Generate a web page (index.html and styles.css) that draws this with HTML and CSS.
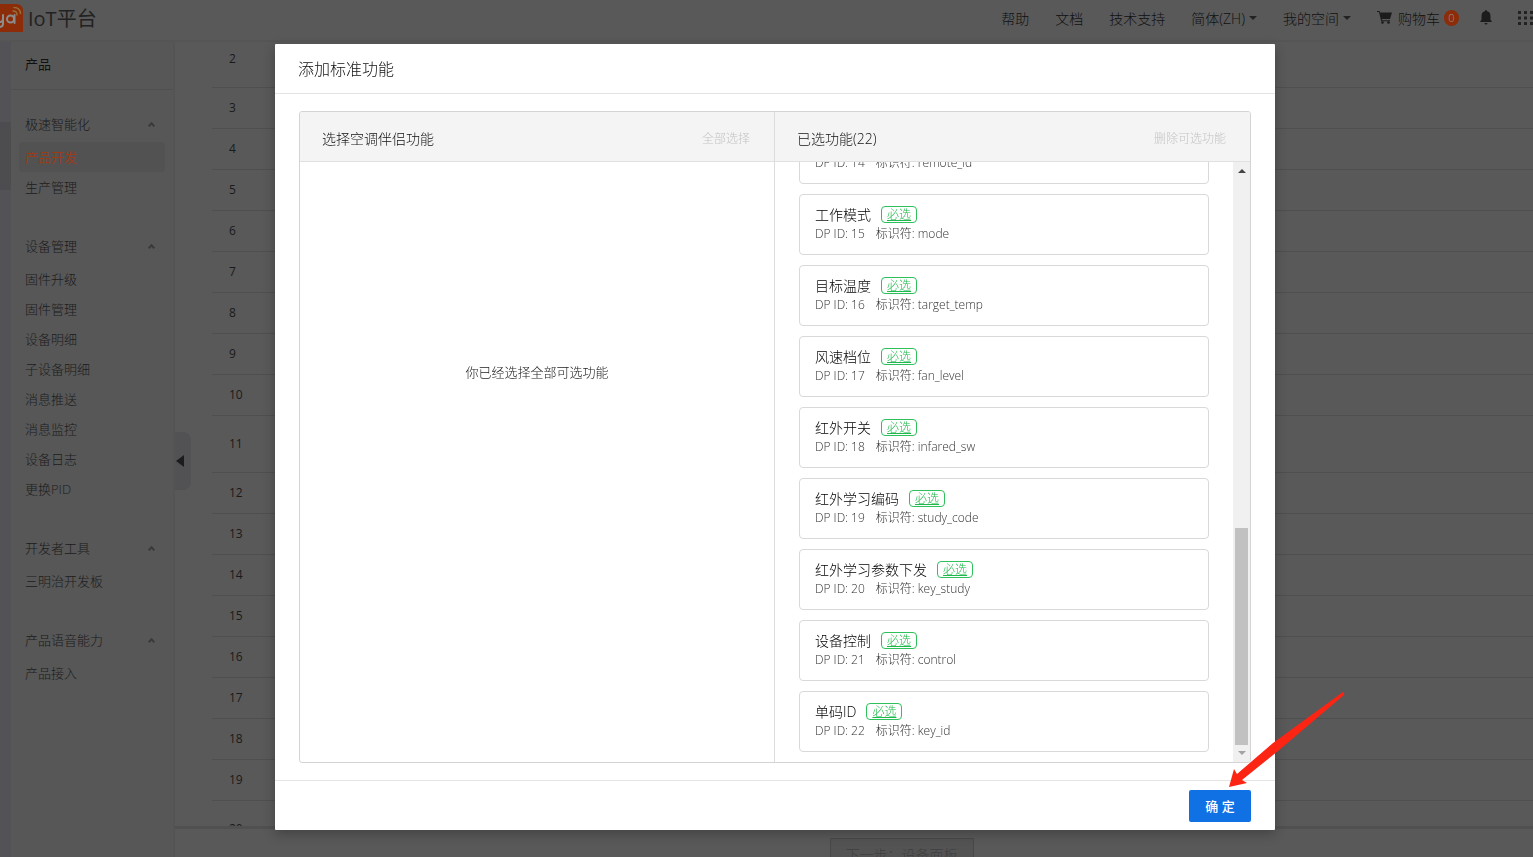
FILE: index.html
```
<!DOCTYPE html>
<html lang="zh-CN">
<head>
<meta charset="utf-8">
<title>IoT平台</title>
<link rel="stylesheet" href="styles.css">
</head>
<body>
<div class="app">
  <header class="topbar">
    <a class="brand" href="#">
      <svg class="brand-mark" width="23" height="32" viewBox="0 0 23 32" aria-hidden="true">
        <path d="M0 4h16q7 0 7 7v21H0z" fill="#8c2c08"/>
        <g fill="none" stroke="#8c8c8c" stroke-width="2" stroke-linecap="round">
          <path d="M-3 15v4q0 3 3 3t3-3v-4M3 18v6q0 3-4 3"/>
          <circle cx="10.500" cy="19" r="3.500"/><path d="M14.500 15v8"/>
          <path d="M13 11q4 0 4 4M14 7.500q6 0 6.500 6" stroke="#94713a" stroke-width="1.500"/>
        </g>
      </svg>
      <span class="brand-name">IoT平台</span>
    </a>
    <nav class="topnav">
      <a href="#">帮助</a>
      <a href="#">文档</a>
      <a href="#">技术支持</a>
      <button class="drop">简体(ZH)<i class="caret"></i></button>
      <button class="drop">我的空间<i class="caret"></i></button>
      <a class="cart" href="#">
        <svg width="15" height="13" viewBox="0 0 15 13" aria-hidden="true"><path d="M0 0h2.600l.5 1.600H15L13 8H4.800l.3 1.300H13v1H4.200L2 1H0z" fill="#1c1c1c"/><circle cx="5.500" cy="11.500" r="1.300" fill="#1c1c1c"/><circle cx="11.500" cy="11.500" r="1.300" fill="#1c1c1c"/></svg>
        <span>购物车</span><span class="count">0</span>
      </a>
      <button class="icon-button bell" aria-label="通知">
        <svg width="12" height="15" viewBox="0 0 12 15" aria-hidden="true"><path d="M6 0q1 0 1 1.300Q10.500 2 10.500 6v3.500L12 12H0l1.500-2.500V6Q1.500 2 5 1.300 5 0 6 0zM4.500 13h3q0 1.500-1.500 1.500T4.500 13z" fill="#1c1c1c"/></svg>
      </button>
      <button class="icon-button" aria-label="应用">
        <svg width="15" height="14" viewBox="0 0 15 14" aria-hidden="true"><path d="M0 0h3v3H0zM6 0h3v3H6zM12 0h3v3h-3zM0 5.500h3v3H0zM6 5.500h3v3H6zM12 5.500h3v3h-3zM0 11h3v3H0zM6 11h3v3H6zM12 11h3v3h-3z" fill="#222"/></svg>
      </button>
    </nav>
  </header>
  <div class="workspace">
    <div class="rail"><div class="rail-active"></div></div>
    <aside class="sidebar">
      <h2 class="side-title">产品</h2>
      <section class="group">
        <button class="group-head">极速智能化<i class="chevron"></i></button>
        <a class="item active" href="#">产品开发</a>
        <a class="item" href="#">生产管理</a>
      </section>
      <section class="group">
        <button class="group-head">设备管理<i class="chevron"></i></button>
        <a class="item" href="#">固件升级</a>
        <a class="item" href="#">固件管理</a>
        <a class="item" href="#">设备明细</a>
        <a class="item" href="#">子设备明细</a>
        <a class="item" href="#">消息推送</a>
        <a class="item" href="#">消息监控</a>
        <a class="item" href="#">设备日志</a>
        <a class="item" href="#">更换PID</a>
      </section>
      <section class="group">
        <button class="group-head">开发者工具<i class="chevron"></i></button>
        <a class="item" href="#">三明治开发板</a>
      </section>
      <section class="group">
        <button class="group-head">产品语音能力<i class="chevron"></i></button>
        <a class="item" href="#">产品接入</a>
      </section>
      <button class="collapse" aria-label="收起"><svg width="8" height="12" viewBox="0 0 8 12" aria-hidden="true"><path d="M8 0v12L0 6z" fill="#1c1c1c"/></svg></button>
    </aside>
    <main class="content">
      <div class="table-area">
        <table class="functions">
          <tr class="tall"><td>2</td></tr>
          <tr><td>3</td></tr>
          <tr><td>4</td></tr>
          <tr><td>5</td></tr>
          <tr><td>6</td></tr>
          <tr><td>7</td></tr>
          <tr><td>8</td></tr>
          <tr><td>9</td></tr>
          <tr><td>10</td></tr>
          <tr class="tall"><td>11</td></tr>
          <tr><td>12</td></tr>
          <tr><td>13</td></tr>
          <tr><td>14</td></tr>
          <tr><td>15</td></tr>
          <tr><td>16</td></tr>
          <tr><td>17</td></tr>
          <tr><td>18</td></tr>
          <tr><td>19</td></tr>
          <tr class="tall"><td>20</td></tr>
        </table>
      </div>
      <footer class="next-bar"><button class="next">下一步：设备面板</button></footer>
    </main>
  </div>
</div>

<div class="modal-layer">
  <section class="modal" role="dialog" aria-labelledby="modal-title">
    <header class="modal-head"><h1 id="modal-title">添加标准功能</h1></header>
    <div class="modal-body">
      <div class="transfer">
        <section class="pane">
          <header class="pane-head"><h2>选择空调伴侣功能</h2><button class="link" disabled>全部选择</button></header>
          <p class="empty">你已经选择全部可选功能</p>
        </section>
        <section class="pane">
          <header class="pane-head"><h2>已选功能(22)</h2><button class="link" disabled>删除可选功能</button></header>
          <div class="scroller">
            <div class="cards">
              <article class="card"><p><span>DP ID: 14</span><span>标识符: remote_id</span></p></article>
              <article class="card"><h3>工作模式<span class="tag">必选</span></h3><p><span>DP ID: 15</span><span>标识符: mode</span></p></article>
              <article class="card"><h3>目标温度<span class="tag">必选</span></h3><p><span>DP ID: 16</span><span>标识符: target_temp</span></p></article>
              <article class="card"><h3>风速档位<span class="tag">必选</span></h3><p><span>DP ID: 17</span><span>标识符: fan_level</span></p></article>
              <article class="card"><h3>红外开关<span class="tag">必选</span></h3><p><span>DP ID: 18</span><span>标识符: infared_sw</span></p></article>
              <article class="card"><h3>红外学习编码<span class="tag">必选</span></h3><p><span>DP ID: 19</span><span>标识符: study_code</span></p></article>
              <article class="card"><h3>红外学习参数下发<span class="tag">必选</span></h3><p><span>DP ID: 20</span><span>标识符: key_study</span></p></article>
              <article class="card"><h3>设备控制<span class="tag">必选</span></h3><p><span>DP ID: 21</span><span>标识符: control</span></p></article>
              <article class="card"><h3>单码ID<span class="tag">必选</span></h3><p><span>DP ID: 22</span><span>标识符: key_id</span></p></article>
            </div>
            <div class="scrollbar" aria-hidden="true">
              <i class="arrow-up"></i><div class="track"><div class="thumb"></div></div><i class="arrow-down"></i>
            </div>
          </div>
        </section>
      </div>
    </div>
    <footer class="modal-foot"><button class="confirm">确 定</button>
      <svg class="pointer" width="116" height="96" viewBox="0 0 116 96" aria-hidden="true"><path d="M0 95L5 77l3 5L44 51 114 0q2 1 1 3L49 59 13 88l5 3z" fill="#fc2413"/></svg>
    </footer>
  </section>
</div>
</body>
</html>
```
FILE: styles.css
```
* { box-sizing: border-box; }
body {
  margin: 0;
  font-family: "Open Sans", "Noto Sans CJK SC", sans-serif;
  font-size: 13px;
  font-weight: 300;
  color: #1a1a1a;
  background: #595959;
  overflow: hidden;
}
h1, h2, h3, p { margin: 0; font-weight: inherit; }
a { color: inherit; text-decoration: none; }
button { font: inherit; color: inherit; border: 0; padding: 0; background: none; }

.app { height: 100vh; display: flex; flex-direction: column; }
.topbar {
  flex: none;
  height: 42px;
  display: flex;
  justify-content: space-between;
  border-bottom: 2px solid #555;
}
.brand { display: flex; align-items: flex-start; gap: 5px; }
.brand-name { font-size: 20px; line-height: 38px; font-weight: 400; color: #222; }
.topnav { display: flex; align-items: center; height: 35px; gap: 26px; font-size: 14px; color: #111; }
.drop { display: flex; align-items: center; gap: 4px; }
.caret { border: 4px solid transparent; border-top-color: #222; border-bottom: 0; }
.cart { display: flex; align-items: center; gap: 6px; }
.count {
  width: 15px; height: 16px; margin-left: -2px;
  border-radius: 8px; background: #8c2c08; color: #999;
  font-size: 11px; line-height: 16px; text-align: center;
}
.icon-button { display: flex; }
.bell { margin-left: -5px; }

.workspace { flex: 1; min-height: 0; display: flex; }
.rail { flex: none; width: 11px; padding-top: 80px; background: #535357; }
.rail-active { height: 68px; background: #4d4d50; }
.sidebar {
  position: relative;
  flex: none;
  width: 164px;
  background: #575757;
  border-right: 2px solid #545454;
}
.side-title {
  height: 48px; line-height: 45px; font-size: 13px; padding-left: 14px;
  color: #111; border-bottom: 1px solid #505050; font-weight: 400;
}
.group { padding: 14px 8px 0; }
.group + .group { padding-top: 24px; }
.group-head {
  width: 100%; height: 38px; padding: 0 9px 0 6px;
  display: flex; align-items: center; justify-content: space-between;
}
.chevron {
  width: 5px; height: 5px; margin: 4px 2px 0 0;
  border: solid #3a3a3a; border-width: 2px 0 0 2px;
  transform: rotate(45deg);
}
.item { display: block; height: 30px; line-height: 31px; padding-left: 6px; color: #1c1c1c; border-radius: 4px; }
.item.active { background: #525252; color: #9c3c17; font-weight: 400; }
.collapse {
  position: absolute; left: 164px; top: 390px;
  width: 16px; height: 58px; padding-left: 1px;
  background: #525255; border-radius: 0 8px 8px 0;
  display: flex; align-items: center;
}
.content { flex: 1; min-width: 0; display: flex; flex-direction: column; }
.table-area { flex: 1; min-height: 0; overflow: hidden; padding-left: 37px; }
.functions { width: 100%; border-collapse: collapse; margin-top: -12px; }
.functions td { height: 41px; padding: 0 0 0 17px; border-bottom: 1px solid #4f4f4f; font-size: 12px; font-weight: 400; }
.functions .tall td { height: 57px; }
.next-bar { flex: none; height: 31px; border-top: 3px solid #505050; display: flex; justify-content: center; overflow: hidden; padding: 9px 0 0 95px; }
.next { height: 32px; padding: 0 15px; flex: none; border: 1px solid #484848; background: #535353; color: #404040; font-size: 14px; }

.modal-layer {
  position: fixed; inset: 0;
  display: flex; justify-content: center; align-items: flex-start;
  padding: 44px 0 27px 17px;
}
.modal {
  width: 1000px; max-width: 100%; height: 100%;
  display: flex; flex-direction: column;
  background: #fff; border-radius: 1px;
  box-shadow: 0 4px 12px rgba(0, 0, 0, .25);
}
.modal-head { flex: none; height: 50px; padding-left: 23px; border-bottom: 1px solid #e4e4e4; }
.modal-head h1 { font-size: 16px; line-height: 51px; color: #111; }
.modal-body { flex: 1; min-height: 0; padding: 17px 24px; }
.transfer {
  height: 100%; display: grid; grid-template-columns: minmax(0, 474fr) minmax(0, 476fr);
  border: 1px solid #d4d4d4; border-radius: 3px; overflow: hidden;
}
.pane { min-width: 0; min-height: 0; display: flex; flex-direction: column; }
.pane + .pane { border-left: 1px solid #dcdcdc; }
.pane-head {
  flex: none; height: 50px; padding: 4px 24px 0 22px;
  display: flex; align-items: center; justify-content: space-between;
  background: #f4f4f4; border-bottom: 1px solid #e0e0e0;
}
.pane-head h2 { font-size: 14px; line-height: 20px; color: #111; }
.link { font-size: 12px; line-height: 18px; color: #c4c4c4; }
.empty { padding-top: 200px; line-height: 20px; text-align: center; color: #222; }
.scroller { flex: 1; min-height: 0; display: flex; overflow: hidden; }
.cards {
  flex: 1; min-width: 0; padding: 0 24px 10px;
  display: flex; flex-direction: column; justify-content: flex-end; gap: 10px;
}
.card {
  flex: none; height: 61px; padding: 10px 15px 11px;
  display: flex; flex-direction: column; justify-content: flex-end;
  border: 1px solid #d9d9d9; border-radius: 4px;
}
.card h3 { display: flex; align-items: center; gap: 10px; height: 18px; margin-bottom: 2px; font-size: 14px; color: #000; }
.card p { display: flex; gap: 11px; height: 18px; line-height: 18px; font-size: 12px; color: #333; }
.tag {
  height: 17px; padding: 0 5px; line-height: 16px;
  border: 1px solid #2fbf5b; border-radius: 4px;
  color: #1fb84c; font-size: 12px; text-decoration: underline;
}
.scrollbar { flex: none; width: 17px; padding: 7px 2px; display: flex; flex-direction: column; align-items: center; background: #f0f0f0; }
.arrow-up { border: 4px solid transparent; border-bottom-color: #444; border-top: 0; }
.arrow-down { border: 4px solid transparent; border-top-color: #a3a3a3; border-bottom: 0; }
.track { flex: 1; width: 13px; padding-bottom: 6px; display: flex; flex-direction: column; justify-content: flex-end; }
.thumb { height: 38%; background: #c1c1c1; }
.modal-foot {
  position: relative; flex: none; height: 50px; padding: 0 24px;
  display: flex; align-items: center; justify-content: flex-end;
  border-top: 1px solid #e4e4e4;
}
.confirm { width: 62px; height: 32px; border-radius: 2px; background: #1071e5; color: #fff; font-size: 13px; font-weight: 500; }
.pointer { position: absolute; right: -70px; bottom: 42px; }
```
